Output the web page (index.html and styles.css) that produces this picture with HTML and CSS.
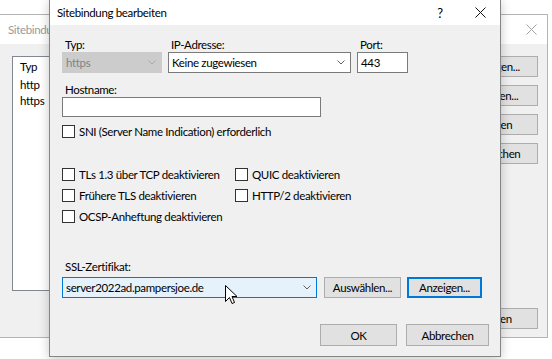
FILE: index.html
```html
<!DOCTYPE html>
<html lang="de">
<head>
    <meta charset="UTF-8">
    <title>Sitebindung bearbeiten</title>
    <link rel="stylesheet" href="styles.css">
</head>
<body>
    <div class="desk">
        <!-- Hinteres Fenster: Sitebindungen -->
        <div class="window back">
            <div class="titlebar">
                <span class="title">Sitebindungen</span>
                <svg class="caption-x" width="11" height="11" viewBox="0 0 11 11"><path d="M0.5 0.5 L10.5 10.5 M10.5 0.5 L0.5 10.5" stroke="#a0a0a0" stroke-width="1" fill="none"/></svg>
            </div>
            <div class="back-body">
                <div class="listbox">
                    <div class="list-head">Typ</div>
                    <div class="list-item">http</div>
                    <div class="list-item">https</div>
                </div>
                <div class="side-buttons">
                    <div class="btn wide">Hinzufügen...</div>
                    <div class="btn wide">Bearbeiten...</div>
                    <div class="btn wide">Entfernen</div>
                    <div class="btn wide">Durchsuchen</div>
                    <div class="btn wide close-btn">Schließen</div>
                </div>
            </div>
        </div>

        <!-- Vorderes Fenster: Sitebindung bearbeiten -->
        <div class="window front">
            <div class="titlebar">
                <span class="title">Sitebindung bearbeiten</span>
                <div class="captions">
                    <span class="caption-btn help">?</span>
                    <span class="caption-btn">
                        <svg width="11" height="11" viewBox="0 0 11 11"><path d="M0.5 0.5 L10.5 10.5 M10.5 0.5 L0.5 10.5" stroke="#111" stroke-width="1" fill="none"/></svg>
                    </span>
                </div>
            </div>
            <div class="body">
                <div class="top-grid">
                    <div class="lbl">Typ:</div>
                    <div class="lbl">IP-Adresse:</div>
                    <div class="lbl">Port:</div>
                    <div class="combo disabled">
                        <span>https</span>
                        <svg class="chev" width="8" height="5" viewBox="0 0 8 5"><path d="M0.5 0.5 L4 4 L7.5 0.5" stroke="#a8a8a8" fill="none"/></svg>
                    </div>
                    <div class="combo">
                        <span>Keine zugewiesen</span>
                        <svg class="chev" width="8" height="5" viewBox="0 0 8 5"><path d="M0.5 0.5 L4 4 L7.5 0.5" stroke="#606060" fill="none"/></svg>
                    </div>
                    <div class="textbox">443</div>
                </div>

                <div class="lbl host-lbl">Hostname:</div>
                <div class="textbox host"></div>

                <div class="check sni"><span class="box"></span>SNI (Server Name Indication) erforderlich</div>

                <div class="options">
                    <div class="check"><span class="box"></span>TLs 1.3 über TCP deaktivieren</div>
                    <div class="check"><span class="box"></span>QUIC deaktivieren</div>
                    <div class="check"><span class="box"></span>Frühere TLS deaktivieren</div>
                    <div class="check"><span class="box"></span>HTTP/2 deaktivieren</div>
                    <div class="check"><span class="box"></span>OCSP-Anheftung deaktivieren</div>
                </div>

                <div class="lbl ssl-lbl">SSL-Zertifikat:</div>
                <div class="ssl-row">
                    <div class="combo focused">
                        <span>server2022ad.pampersjoe.de</span>
                        <svg class="chev" width="8" height="5" viewBox="0 0 8 5"><path d="M0.5 0.5 L4 4 L7.5 0.5" stroke="#606060" fill="none"/></svg>
                    </div>
                    <div class="btn">Auswählen...</div>
                    <div class="btn default">Anzeigen...</div>
                </div>

                <div class="footer">
                    <div class="btn ok">OK</div>
                    <div class="btn cancel">Abbrechen</div>
                </div>
            </div>
        </div>

        <svg class="cursor" width="13" height="20" viewBox="0 0 13 20">
            <path d="M0.5 0.5 L0.5 16.5 L4.5 12.5 L7 18.5 L9.5 17.5 L7 11.5 L12 11.5 Z" fill="#fff" stroke="#000" stroke-width="1"/>
        </svg>
    </div>
</body>
</html>
```

FILE: styles.css
```css
body {
    margin: 0;
    background: #ffffff;
    font-family: Lato, 'Noto Sans', sans-serif;
    font-size: 11.5px;
    letter-spacing: -0.35px;
    color: #000;
    overflow: hidden;
}

.desk {
    position: relative;
    width: 552px;
    height: 359px;
    overflow: hidden;
}

.window {
    position: absolute;
    box-sizing: border-box;
    background: #f0f0f0;
    display: flex;
    flex-direction: column;
}

/* hinteres Fenster */
.back {
    left: -1px;
    top: 14px;
    width: 549px;
    height: 324px;
    border: 1px solid #b4b4b4;
}

.back .titlebar {
    height: 29px;
    background: #fff;
    display: flex;
    align-items: center;
    justify-content: space-between;
    padding: 0 10px 0 8px;
}

.back .title {
    color: #9a9a9a;
}

.back-body {
    flex: 1;
    display: flex;
    padding: 12px 9px 8px 12px;
    gap: 10px;
}

.listbox {
    flex: 1;
    height: 235px;
    box-sizing: border-box;
    background: #fff;
    border: 1px solid #828790;
}

.list-head {
    height: 20px;
    line-height: 20px;
    padding-left: 7px;
}

.list-item {
    height: 16px;
    line-height: 16px;
    padding-left: 7px;
}

.side-buttons {
    width: 98px;
    display: flex;
    flex-direction: column;
    gap: 8px;
}

.side-buttons .btn {
    height: 21px;
}

.side-buttons .close-btn {
    margin-top: auto;
}

/* vorderes Fenster */
.front {
    left: 49px;
    top: -1px;
    width: 452px;
    height: 358px;
    border: 1px solid #858585;
    box-shadow: 0 2px 10px rgba(0, 0, 0, 0.22);
}

.front .titlebar {
    height: 25px;
    background: #fff;
    display: flex;
    align-items: center;
    justify-content: space-between;
    padding-left: 7px;
}

.captions {
    display: flex;
    height: 100%;
}

.caption-btn {
    width: 40px;
    display: flex;
    align-items: center;
    justify-content: center;
    font-size: 13px;
}

.body {
    flex: 1;
    display: flex;
    flex-direction: column;
    padding: 12px 11px 0 12px;
}

.lbl {
    height: 15px;
    line-height: 15px;
    padding-left: 3px;
    white-space: nowrap;
}

.top-grid {
    display: grid;
    grid-template-columns: 100px 183px 51px;
    column-gap: 6px;
}

.combo, .textbox {
    box-sizing: border-box;
    height: 21px;
    border: 1px solid #7a7a7a;
    background: #fff;
    display: flex;
    align-items: center;
    justify-content: space-between;
    padding: 0 5px 0 3px;
    white-space: nowrap;
}

.chev {
    flex-shrink: 0;
}

.combo.disabled {
    background: #cccccc;
    border-color: #cccccc;
    color: #838383;
}

.combo.focused {
    background: #e5f1fb;
    border-color: #0078d7;
    width: 255px;
    flex-shrink: 0;
}

.host-lbl {
    margin-top: 9px;
}

.textbox.host {
    width: 259px;
    height: 20px;
}

.check {
    display: flex;
    align-items: center;
    height: 21px;
    white-space: nowrap;
}

.box {
    flex-shrink: 0;
    width: 13px;
    height: 13px;
    box-sizing: border-box;
    border: 1px solid #333;
    background: #fff;
    margin-right: 4px;
}

.sni {
    margin-top: 4px;
}

.options {
    margin-top: 22px;
    display: grid;
    grid-template-columns: 173px auto;
}

.ssl-lbl {
    margin-top: 32px;
}

.ssl-row {
    margin-top: 3px;
    display: flex;
    gap: 6px;
}

.ssl-row .combo {
    margin-right: 1px;
}

.btn {
    box-sizing: border-box;
    flex-shrink: 0;
    height: 21px;
    background: #e1e1e1;
    border: 1px solid #adadad;
    display: flex;
    align-items: center;
    justify-content: center;
    white-space: nowrap;
}

.ssl-row .btn {
    width: 77px;
}

.ssl-row .btn.default {
    width: 75px;
    border: 2px solid #0078d7;
}

.footer {
    margin-top: 26px;
    display: flex;
    justify-content: flex-end;
    gap: 9px;
}

.footer .btn {
    height: 22px;
}

.btn.ok {
    width: 77px;
}

.btn.cancel {
    width: 83px;
}

.cursor {
    position: absolute;
    left: 225px;
    top: 285px;
}
```
